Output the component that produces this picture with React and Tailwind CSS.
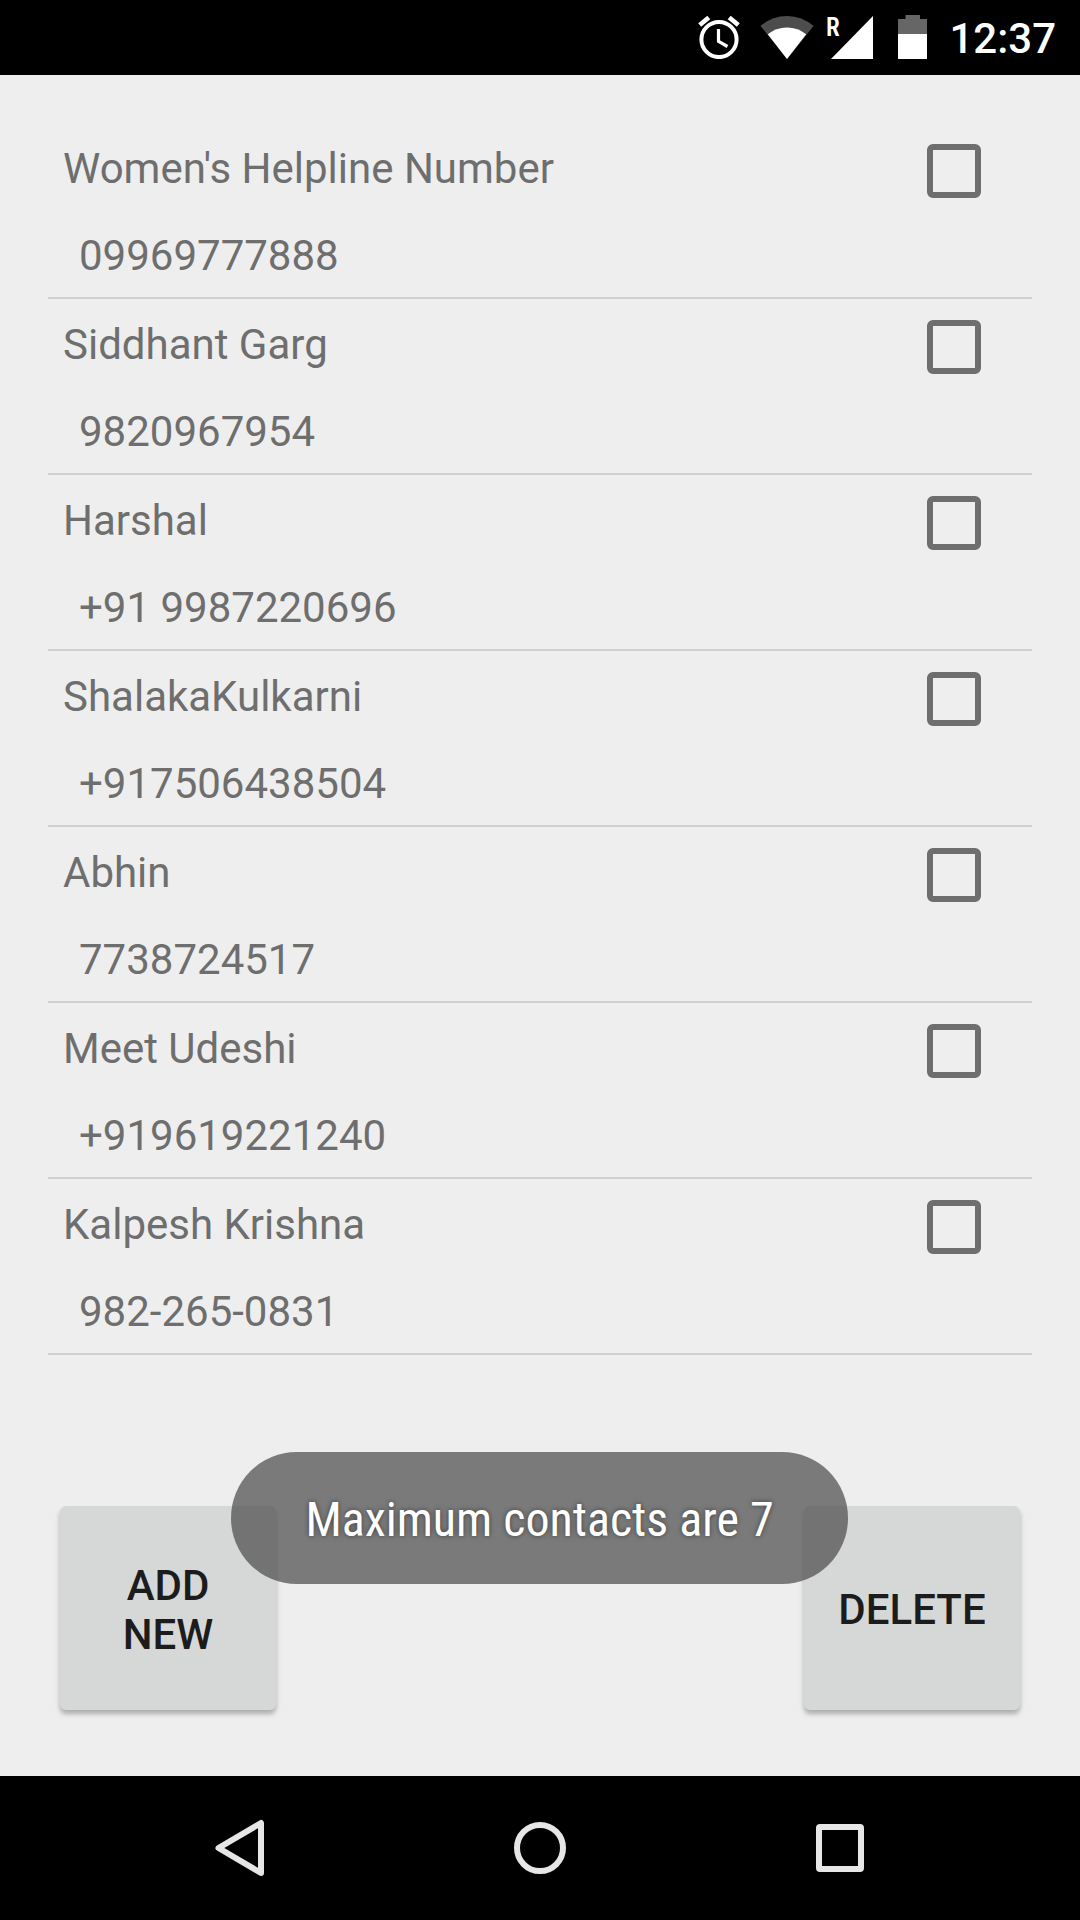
import React from "react";

const contacts = [
  { name: "Women's Helpline Number", phone: "09969777888" },
  { name: "Siddhant Garg", phone: "9820967954" },
  { name: "Harshal", phone: "+91 9987220696" },
  { name: "ShalakaKulkarni", phone: "+917506438504" },
  { name: "Abhin", phone: "7738724517" },
  { name: "Meet Udeshi", phone: "+919619221240" },
  { name: "Kalpesh Krishna", phone: "982-265-0831" },
];

function AlarmIcon() {
  return (
    <svg className="h-11 w-[42px]" viewBox="0 0 42 44" fill="none" stroke="#fff" aria-label="Alarm set">
      <circle cx="21" cy="24.500" r="17.6" strokeWidth="4" />
      <path d="M1.7 10 10.8 2.4M31.2 2.4l9.100 7.600" strokeWidth="4.6" />
      <path d="M20.500 14v12.300l9 5.200" strokeWidth="3.2" />
    </svg>
  );
}

function WifiIcon() {
  return (
    <svg className="h-11 w-[54px]" viewBox="0 0 54 44" aria-label="Wi-Fi">
      <path d="M27 44 0.5 11Q12 1 27 1T53.500 11Z" fill="#4d4d4d" />
      <path d="M27 44 7.800 19.300Q16 12.500 27 12.500T46.200 19.300Z" fill="#fff" />
    </svg>
  );
}

function SignalIcon() {
  return (
    <svg className="h-14 w-12" viewBox="0 -6 48 56" fill="#fff" aria-label="Mobile signal, roaming">
      <path d="M5 44H47V1Z" />
      <text x="0" y="21" fontFamily="'Roboto Condensed', Roboto, sans-serif" fontWeight="600" fontSize="25">R</text>
    </svg>
  );
}

function BatteryIcon() {
  return (
    <svg className="h-11 w-[29px]" viewBox="0 0 29 44" aria-label="Battery">
      <path d="M7.500 0H22V4H29V19H0V4H7.500Z" fill="#666" />
      <path d="M0 19H29V44H0Z" fill="#fff" />
    </svg>
  );
}

function StatusBar() {
  return (
    <header className="flex h-[75px] items-center justify-end bg-black pr-6 pb-px text-white">
      <AlarmIcon />
      <div className="ml-5 flex">
        <WifiIcon />
      </div>
      <div className="ml-3 flex">
        <SignalIcon />
      </div>
      <div className="ml-6 flex">
        <BatteryIcon />
      </div>
      <time className="ml-[22px] pt-1 text-[42px] leading-[50px] font-medium">12:37</time>
    </header>
  );
}

function ContactRow({ name, phone, id }) {
  return (
    <li className="flex items-start justify-between border-b-2 border-[#cfcfcf] pt-[18px] pr-[51px] pb-[13px] pl-[15px]">
      <label htmlFor={id} className="flex flex-col gap-[31px] text-[42px] leading-[56px] text-[#6e6e6e]">
        <span>{name}</span>
        <span className="pl-4">{phone}</span>
      </label>
      <input
        id={id}
        type="checkbox"
        className="mt-[3px] size-[54px] shrink-0 appearance-none rounded-md border-6 border-[#6e6e6e] checked:bg-[#6e6e6e]"
      />
    </li>
  );
}

function ActionButton({ children }) {
  return (
    <button
      type="button"
      className="h-[204px] w-[216px] rounded-md bg-[#d6d8d7] px-6 pt-[3px] text-[42px] leading-[49px] font-medium text-[#1c1c1c] uppercase shadow-[0_4px_5px_rgba(0,0,0,0.28)]"
    >
      {children}
    </button>
  );
}

function NavBar() {
  return (
    <nav className="grid h-36 grid-cols-3 bg-black px-[90px]">
      <button type="button" aria-label="Back" className="flex items-center justify-center">
        <svg className="size-[60px]" viewBox="0 0 60 60" fill="none" stroke="#e6e6e6" strokeWidth="6" strokeLinejoin="round">
          <path d="M51 5V55L8.500 30Z" />
        </svg>
      </button>
      <button type="button" aria-label="Home" className="flex items-center justify-center">
        <span className="size-[52px] rounded-full border-6 border-[#e6e6e6]" />
      </button>
      <button type="button" aria-label="Recent apps" className="flex items-center justify-center">
        <span className="size-12 rounded-sm border-6 border-[#e6e6e6]" />
      </button>
    </nav>
  );
}

export default function App() {
  return (
    <div className="flex min-h-screen flex-col bg-[#eeeeee] font-[Roboto,sans-serif]">
      <StatusBar />
      <main className="relative flex flex-1 flex-col justify-between pt-12 pb-[66px]">
        <ul className="mx-12">
          {contacts.map((c, i) => (
            <ContactRow key={c.name} id={`contact-${i}`} name={c.name} phone={c.phone} />
          ))}
        </ul>
        <div className="mt-12 flex justify-between px-[60px]">
          <ActionButton>Add New</ActionButton>
          <ActionButton>Delete</ActionButton>
        </div>
        <div className="pointer-events-none absolute inset-x-0 bottom-48 flex justify-center pr-px">
          <div
            role="status"
            className="flex h-[132px] w-[617px] items-center justify-center rounded-full bg-[#484848]/70 pt-1 font-['Roboto_Condensed',Roboto,sans-serif] text-5xl whitespace-nowrap text-white [text-shadow:0_0_5px_rgba(0,0,0,0.5)]"
          >
            Maximum contacts are 7
          </div>
        </div>
      </main>
      <NavBar />
    </div>
  );
}
